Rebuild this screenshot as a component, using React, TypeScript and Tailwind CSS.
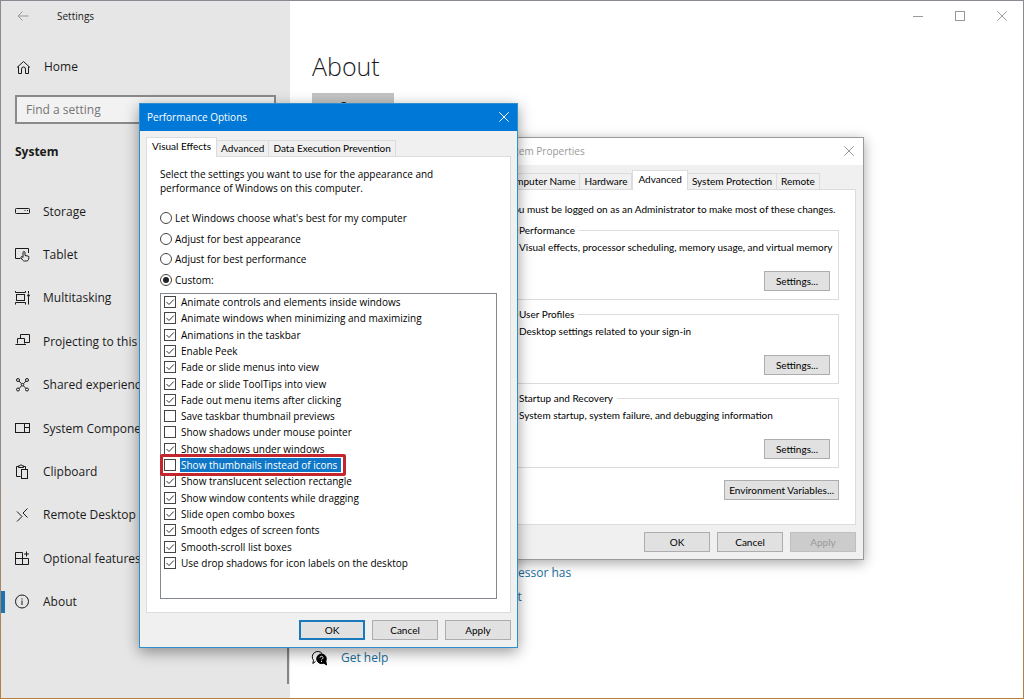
import { useState } from "react";
import type { ReactNode } from "react";

type NavItem = {
  label: string;
  icon: ReactNode;
};

const navItems: NavItem[] = [
  {
    label: "Storage",
    icon: (
      <>
        <rect x="0.5" y="4.5" width="14" height="5" rx="0.8" />
        <path d="M9.5 6.5h1M12 6.5h1" />
      </>
    ),
  },
  {
    label: "Tablet",
    icon: (
      <>
        <path d="M5.500 10.500H0.500V0.500H13.500V5" />
        <path d="M8 9.500V4.500a1 1 0 0 1 2 0v3l3 .6a1 1 0 0 1 .9 1.200l-.4 2.200a2 2 0 0 1-2 1.500H9.500a2.500 2.500 0 0 1-2-1l-1.500-2.300c-.5-.8.6-1.500 1.200-.9z" />
      </>
    ),
  },
  {
    label: "Multitasking",
    icon: (
      <>
        <rect x="1.500" y="3.500" width="8" height="6" />
        <path d="M0.500 0V1.500h10V0M0.500 13.500v-2h10v2M13.500 0v2.500M13.500 6v7.500" />
        <circle cx="13.500" cy="4.500" r="0.900" fill="currentColor" />
      </>
    ),
  },
  {
    label: "Projecting to this PC",
    icon: (
      <>
        <path d="M5.500 4V0.500h9V8.500H10" />
        <path d="M2.500 9.500V4.500H9.500V9.500M0.500 10.500h10.500" />
      </>
    ),
  },
  {
    label: "Shared experiences",
    icon: (
      <>
        <circle cx="3" cy="2" r="1.500" />
        <circle cx="12" cy="2" r="1.500" />
        <circle cx="3" cy="11.500" r="1.500" />
        <circle cx="12" cy="11.500" r="1.500" />
        <circle cx="7.500" cy="6.700" r="1.300" />
        <path d="M4 3.100l2.500 2.600M11 3.100L8.500 5.700M4 10.500l2.500-2.600M11 10.500L8.500 7.900" />
      </>
    ),
  },
  {
    label: "System Components",
    icon: (
      <>
        <rect x="0.500" y="2.500" width="14" height="9" />
        <path d="M9.500 2.500v9M9.500 6.500h5" />
      </>
    ),
  },
  {
    label: "Clipboard",
    icon: (
      <>
        <path d="M5.500 11.500H1.500V1.500H3.500M8.500 1.500H10.500V4" />
        <path d="M3.500 2.500V0.800H5a1 1 0 0 1 2 0h1.500V2.500z" />
        <rect x="6.500" y="4.500" width="6" height="9" />
      </>
    ),
  },
  {
    label: "Remote Desktop",
    icon: <path d="M2 3.500L7 8.500L2 13.500M12.500 0.500L8 5L12.500 9.500" />,
  },
  {
    label: "Optional features",
    icon: (
      <>
        <path d="M7.500 1.500H0.500V13.500H13.500V7.500H0.500M7.500 1.500V13.500" />
        <path d="M11.500 0.500v5M9 3h5" />
      </>
    ),
  },
  {
    label: "About",
    icon: (
      <>
        <circle cx="7" cy="6.500" r="6.500" />
        <path d="M7 5.500v4.500M7 3.300v1.200" />
      </>
    ),
  },
];

type Effect = {
  label: string;
  enabled: boolean;
};

const initialEffects: Effect[] = [
  { label: "Animate controls and elements inside windows", enabled: true },
  { label: "Animate windows when minimizing and maximizing", enabled: true },
  { label: "Animations in the taskbar", enabled: true },
  { label: "Enable Peek", enabled: true },
  { label: "Fade or slide menus into view", enabled: true },
  { label: "Fade or slide ToolTips into view", enabled: true },
  { label: "Fade out menu items after clicking", enabled: true },
  { label: "Save taskbar thumbnail previews", enabled: false },
  { label: "Show shadows under mouse pointer", enabled: false },
  { label: "Show shadows under windows", enabled: true },
  { label: "Show thumbnails instead of icons", enabled: false },
  { label: "Show translucent selection rectangle", enabled: true },
  { label: "Show window contents while dragging", enabled: true },
  { label: "Slide open combo boxes", enabled: true },
  { label: "Smooth edges of screen fonts", enabled: true },
  { label: "Smooth-scroll list boxes", enabled: true },
  { label: "Use drop shadows for icon labels on the desktop", enabled: true },
];

const modes = [
  "Let Windows choose what's best for my computer",
  "Adjust for best appearance",
  "Adjust for best performance",
  "Custom:",
];

const propertyGroups = [
  {
    title: "Performance",
    text: "Visual effects, processor scheduling, memory usage, and virtual memory",
  },
  { title: "User Profiles", text: "Desktop settings related to your sign-in" },
  {
    title: "Startup and Recovery",
    text: "System startup, system failure, and debugging information",
  },
];

function Icon({ children }: { children: ReactNode }) {
  return (
    <svg
      viewBox="0 0 15 15"
      className="size-[15px] shrink-0 overflow-visible"
      fill="none"
      stroke="currentColor"
      aria-hidden="true"
    >
      {children}
    </svg>
  );
}

function CloseIcon() {
  return (
    <svg viewBox="0 0 10 10" className="size-[10px]" stroke="currentColor" aria-hidden="true">
      <path d="M0.300 0.300L9.700 9.700M9.700 0.300L0.300 9.700" />
    </svg>
  );
}

function DialogButton({
  children,
  primary,
  disabled,
}: {
  children: ReactNode;
  primary?: boolean;
  disabled?: boolean;
}) {
  const look = primary
    ? "border-2 border-[#1a78bd] bg-[#e1e1e1]"
    : disabled
      ? "border border-[#bfbfbf] bg-[#cccccc] text-[#9a9a9a]"
      : "border border-[#adadad] bg-[#e1e1e1]";

  return (
    <button
      type="button"
      disabled={disabled}
      className={`flex h-5 min-w-[66px] items-center justify-center px-1 ${look}`}
    >
      {children}
    </button>
  );
}

function Tabs({ tabs, active }: { tabs: string[]; active: string }) {
  return (
    <div role="tablist" className="flex items-end">
      {tabs.map((tab) => (
        <button
          key={tab}
          type="button"
          role="tab"
          aria-selected={tab === active}
          className={
            tab === active
              ? "z-10 -mb-px h-5 border border-b-0 border-[#dcdcdc] bg-white px-[5px] pb-1 whitespace-nowrap"
              : "h-4 border border-b-0 border-l-0 border-[#dcdcdc] bg-[#f0f0f0] px-1 pb-0.5 whitespace-nowrap"
          }
        >
          {tab}
        </button>
      ))}
    </div>
  );
}

function Sidebar() {
  return (
    <aside className="flex w-[289px] shrink-0 flex-col bg-[#e6e6e6]">
      <header className="flex h-[30px] items-center gap-7 pl-4">
        <button type="button" aria-label="Back" className="text-[#999999]">
          <svg viewBox="0 0 12 12" className="size-3" fill="none" stroke="currentColor">
            <path d="M11.500 6H1M5.500 1.500L1 6l4.500 4.500" />
          </svg>
        </button>
        <h1 className="text-[10px]">Settings</h1>
      </header>

      <a href="#home" className="mt-5 flex h-8 items-center gap-[13px] pl-[15px]">
        <Icon>
          <path d="M1 7.500L7.500 1.500L14 7.500M2.500 6.500V13.500H5.500V9a2 2 0 0 1 4 0V13.500H12.500V6.500" />
        </Icon>
        Home
      </a>

      <input
        type="text"
        aria-label="Find a setting"
        placeholder="Find a setting"
        className="mt-3 mr-[14px] ml-[14px] h-[29px] border-2 border-[#8a8a8a] bg-[#f2f2f2] px-[9px] placeholder:text-[#767676]"
      />

      <h2 className="mt-[18px] pl-[14px] leading-5 font-bold">System</h2>

      <div className="mt-7 flex h-[494px] justify-between">
        <ul className="grid h-[434px] flex-1 auto-rows-fr">
          {navItems.map((item) => (
            <li key={item.label}>
              <a
                href="#system"
                aria-current={item.label === "About" ? "page" : undefined}
                className="relative flex h-full items-center gap-[13px] pl-[14px] whitespace-nowrap"
              >
                {item.label === "About" ? (
                  <span className="absolute left-0 h-[22px] w-1 bg-[#1874b4]" />
                ) : null}
                <Icon>{item.icon}</Icon>
                {item.label}
              </a>
            </li>
          ))}
        </ul>
        <div className="mr-px w-0.5 bg-[#858585]" />
      </div>
    </aside>
  );
}

function AboutPage() {
  return (
    <main className="flex flex-1 flex-col items-start bg-white">
      <div className="flex h-[29px] items-center gap-8 self-end pr-4 text-[#9a9a9a]">
        <button type="button" aria-label="Minimize">
          <svg viewBox="0 0 10 10" className="size-[10px]" stroke="currentColor">
            <path d="M0 5.500h10" />
          </svg>
        </button>
        <button type="button" aria-label="Maximize">
          <svg viewBox="0 0 10 10" className="size-[10px]" fill="none" stroke="currentColor">
            <rect x="0.500" y="0.500" width="9" height="9" />
          </svg>
        </button>
        <button type="button" aria-label="Close">
          <CloseIcon />
        </button>
      </div>

      <div className="flex flex-col items-start pl-[22px]">
        <h2 className="mt-[17px] text-[25px] leading-[38px] font-light">About</h2>
        <button type="button" className="mt-2 h-7 w-[82px] bg-[#c4c4c4]">
          Copy
        </button>
        <div className="mt-[442px] flex flex-col items-start gap-1 leading-5 text-[#1a6f9c]">
          <a href="#cores">Finding out how many cores my processor has</a>
          <a href="#languages">Checking multiple Languages support</a>
        </div>
        <a
          href="#help"
          className="mt-[41px] flex items-center gap-[14px] leading-5 text-[#1a6f9c]"
        >
          <svg
            viewBox="0 0 15 15"
            className="size-[15px] overflow-visible text-black"
            fill="none"
            stroke="currentColor"
            aria-hidden="true"
          >
            <path d="M3.500 10.500L0.800 12.500L1.500 9.300A5 5 0 1 1 10 2.500" />
            <circle cx="9.500" cy="7.800" r="4.800" fill="currentColor" />
            <path d="M11 11.500l3.500 2.500l-.8-4.500z" fill="currentColor" />
            <path d="M8 6.700a1.500 1.500 0 1 1 2.200 1.300q-.7.400-.7 1.200M9.500 10v1" stroke="white" />
          </svg>
          Get help
        </a>
      </div>
    </main>
  );
}

function SystemProperties() {
  return (
    <section
      aria-label="System Properties"
      className="absolute top-[137px] left-[491px] w-[373px] border border-[#9a9a9a] bg-[#f0f0f0] font-['Lato',sans-serif] text-[10px] leading-[14px] text-black shadow-[0_3px_12px_rgba(0,0,0,0.35)]"
    >
      <header className="flex h-[27px] items-center justify-between bg-white pr-[9px] pb-0.5 pl-2 font-['Open_Sans',sans-serif] text-[#999999]">
        <h2>System Properties</h2>
        <button type="button" aria-label="Close">
          <CloseIcon />
        </button>
      </header>

      <div className="px-[7px] pt-[5px] pb-[7px]">
        <Tabs
          tabs={["Computer Name", "Hardware", "Advanced", "System Protection", "Remote"]}
          active="Advanced"
        />
        <div className="border border-[#dcdcdc] bg-white pt-3 pr-4 pb-6 pl-2">
          <p className="whitespace-nowrap">
            You must be logged on as an Administrator to make most of these changes.
          </p>
          <div className="mt-2 flex flex-col gap-2">
            {propertyGroups.map((group) => (
              <fieldset
                key={group.title}
                className="min-w-0 border border-[#dcdcdc] pr-2 pb-2 pl-[10px]"
              >
                <legend className="pr-1 leading-3">{group.title}</legend>
                <p className="mt-1 whitespace-nowrap">{group.text}</p>
                <div className="mt-[17px] flex justify-end">
                  <DialogButton>Settings...</DialogButton>
                </div>
              </fieldset>
            ))}
          </div>
          <div className="mt-3 flex justify-end">
            <DialogButton>Environment Variables...</DialogButton>
          </div>
        </div>
        <div className="mt-[7px] flex justify-end gap-[7px]">
          <DialogButton>OK</DialogButton>
          <DialogButton>Cancel</DialogButton>
          <DialogButton disabled>Apply</DialogButton>
        </div>
      </div>
    </section>
  );
}

function PerformanceOptions() {
  const [mode, setMode] = useState("Custom:");
  const [effects, setEffects] = useState<Effect[]>(initialEffects);
  const [selected, setSelected] = useState("Show thumbnails instead of icons");

  function toggleEffect(label: string) {
    setSelected(label);
    setEffects((current) =>
      current.map((effect) =>
        effect.label === label ? { ...effect, enabled: !effect.enabled } : effect
      )
    );
  }

  return (
    <section
      aria-label="Performance Options"
      className="absolute top-[103px] left-[139px] w-[379px] border border-[#2f8fcc] bg-[#f0f0f0] text-[10px] leading-[14px] text-black shadow-[0_4px_14px_rgba(0,0,0,0.4)]"
    >
      <header className="flex h-[27px] items-center justify-between bg-[#0078d7] pr-2 pb-0.5 pl-[7px] text-white">
        <h2>Performance Options</h2>
        <button type="button" aria-label="Close">
          <CloseIcon />
        </button>
      </header>

      <div className="px-[6px] pt-[6px] pb-[7px]">
        <div className="font-['Lato',sans-serif]">
          <Tabs
            tabs={["Visual Effects", "Advanced", "Data Execution Prevention"]}
            active="Visual Effects"
          />
        </div>

        <div className="border border-[#dcdcdc] bg-white px-[13px] pt-[10px] pb-[13px]">
          <p>
            Select the settings you want to use for the appearance and
            <br />
            performance of Windows on this computer.
          </p>

          <div className="mt-[13px] grid h-[82px] auto-rows-fr">
            {modes.map((name) => (
              <label key={name} className="flex items-center gap-[3px]">
                <input
                  type="radio"
                  name="mode"
                  checked={mode === name}
                  onChange={() => setMode(name)}
                  className="size-3 appearance-none rounded-full border border-[#444444] bg-white bg-clip-content p-0.5 checked:bg-[#222222]"
                />
                {name}
              </label>
            ))}
          </div>

          <ul className="mt-[3px] grid h-[306px] auto-rows-[minmax(0,1fr)] border border-[#828790] pb-[27px] pl-[3px]">
            {effects.map((effect) => (
              <li key={effect.label} className="relative flex items-center">
                <label className="flex items-center gap-1 whitespace-nowrap">
                  <span className="relative size-3 shrink-0">
                    <input
                      type="checkbox"
                      checked={effect.enabled}
                      onChange={() => toggleEffect(effect.label)}
                      className="peer absolute inset-0 size-3 appearance-none border border-[#444444] bg-white"
                    />
                    <svg
                      viewBox="0 0 12 12"
                      className="pointer-events-none absolute inset-0 hidden size-3 peer-checked:block"
                      fill="none"
                      stroke="#333333"
                      aria-hidden="true"
                    >
                      <path d="M2.500 6L5 8.500L9.800 3.500" />
                    </svg>
                  </span>
                  <span
                    className={
                      effect.label === selected
                        ? "relative bg-[#0f77c8] pr-1 pl-px text-white"
                        : "px-px"
                    }
                  >
                    {effect.label}
                  </span>
                  {effect.label === "Show thumbnails instead of icons" ? (
                    <span className="pointer-events-none absolute -top-[3px] -left-1 z-10 h-[22px] w-[186px] rounded-xs border-3 border-[#c4262e]" />
                  ) : null}
                </label>
              </li>
            ))}
          </ul>
        </div>

        <div className="mt-[7px] flex justify-end gap-[7px] font-['Lato',sans-serif]">
          <DialogButton primary>OK</DialogButton>
          <DialogButton>Cancel</DialogButton>
          <DialogButton>Apply</DialogButton>
        </div>
      </div>
    </section>
  );
}

export default function App() {
  return (
    <div className="relative flex min-h-screen overflow-hidden bg-linear-to-b from-[#8a8a92] from-60% to-[#b5803c] p-px font-['Open_Sans',sans-serif] text-[12px] text-[#1a1a1a]">
      <Sidebar />
      <AboutPage />
      <SystemProperties />
      <PerformanceOptions />
    </div>
  );
}
